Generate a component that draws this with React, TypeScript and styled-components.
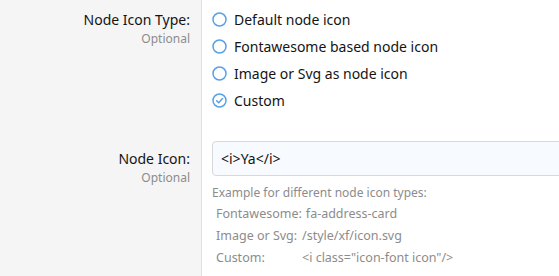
import React from 'react';
import styled, { createGlobalStyle } from 'styled-components';

const GlobalStyle = createGlobalStyle`
    html, body {
        margin: 0;
        padding: 0;
        background: #fff;
    }
    body {
        font-family: "Noto Sans", "Open Sans", sans-serif;
        color: #141414;
        overflow: hidden;
    }
`;

const Form = styled.div`
    width: 559px;
    height: 276px;
    overflow: hidden;
    display: flex;
    flex-direction: column;
`;

const FormRow = styled.div<{ $grow?: boolean }>`
    display: flex;
    flex: ${(p) => (p.$grow ? '1' : '0 0 auto')};
`;

const LabelCell = styled.div<{ $top: number }>`
    width: 190px;
    flex: 0 0 190px;
    padding: ${(p) => p.$top}px 11px 0 0;
    background: #f5f5f5;
    border-right: 1px solid #e0e0e0;
    text-align: right;
`;

const LabelTitle = styled.div`
    font-size: 14px;
    line-height: 20px;
`;

const LabelHint = styled.div`
    font-size: 12px;
    line-height: 18px;
    color: #8c8c8c;
`;

const Controls = styled.div<{ $top: number; $bottom: number }>`
    flex: 1;
    min-width: 0;
    padding: ${(p) => p.$top}px 0 ${(p) => p.$bottom}px 10px;
`;

const RadioList = styled.ul`
    list-style: none;
    margin: 0;
    padding: 0;
`;

const RadioItem = styled.li`
    display: flex;
    align-items: center;
    gap: 7px;
    height: 27px;
    font-size: 14px;
`;

const TextInput = styled.div`
    box-sizing: border-box;
    width: calc(100% + 20px);
    height: 35px;
    padding: 0 8px;
    display: flex;
    align-items: center;
    background: #f7fbff;
    border: 1px solid #d8d8d8;
    border-radius: 4px;
    font-size: 14px;
`;

const Explain = styled.div`
    margin-top: 7px;
    font-size: 12px;
    color: #8c8c8c;
`;

const ExplainIntro = styled.div`
    line-height: 20px;
`;

const ExampleRow = styled.div`
    display: flex;
    font-size: 12.5px;
    line-height: 22px;
    padding-left: 4px;
`;

const ExampleKey = styled.span`
    min-width: 82px;
    margin-right: 4px;
    white-space: nowrap;
`;

const RadioIcon: React.FC<{ checked?: boolean }> = ({ checked }) => (
    <svg width="15" height="15" viewBox="0 0 15 15">
        <circle cx="7.5" cy="7.5" r="6.5" fill="none" stroke="#5aa1e8" strokeWidth="1.5" />
        {checked && (
            <path d="M4.6 7.7 L6.7 9.7 L10.5 5.6" fill="none" stroke="#5aa1e8" strokeWidth="1.5" strokeLinecap="round" strokeLinejoin="round" />
        )}
    </svg>
);

const options = [
    { label: 'Default node icon', checked: false },
    { label: 'Fontawesome based node icon', checked: false },
    { label: 'Image or Svg as node icon', checked: false },
    { label: 'Custom', checked: true },
];

const examples = [
    { key: 'Fontawesome:', value: 'fa-address-card' },
    { key: 'Image or Svg:', value: '/style/xf/icon.svg' },
    { key: 'Custom:', value: '<i class="icon-font icon"/>' },
];

const App: React.FC = () => {
    return (
        <>
            <GlobalStyle />
            <Form>
                <FormRow>
                    <LabelCell $top={10}>
                        <LabelTitle>Node Icon Type:</LabelTitle>
                        <LabelHint>Optional</LabelHint>
                    </LabelCell>
                    <Controls $top={6} $bottom={13}>
                        <RadioList>
                            {options.map((o) => (
                                <RadioItem key={o.label}>
                                    <RadioIcon checked={o.checked} />
                                    {o.label}
                                </RadioItem>
                            ))}
                        </RadioList>
                    </Controls>
                </FormRow>
                <FormRow $grow>
                    <LabelCell $top={22}>
                        <LabelTitle>Node Icon:</LabelTitle>
                        <LabelHint>Optional</LabelHint>
                    </LabelCell>
                    <Controls $top={14} $bottom={0}>
                        <TextInput>&lt;i&gt;Ya&lt;/i&gt;</TextInput>
                        <Explain>
                            <ExplainIntro>Example for different node icon types:</ExplainIntro>
                            {examples.map((e) => (
                                <ExampleRow key={e.key}>
                                    <ExampleKey>{e.key}</ExampleKey>
                                    {e.value}
                                </ExampleRow>
                            ))}
                        </Explain>
                    </Controls>
                </FormRow>
            </Form>
        </>
    );
};

export default App;
